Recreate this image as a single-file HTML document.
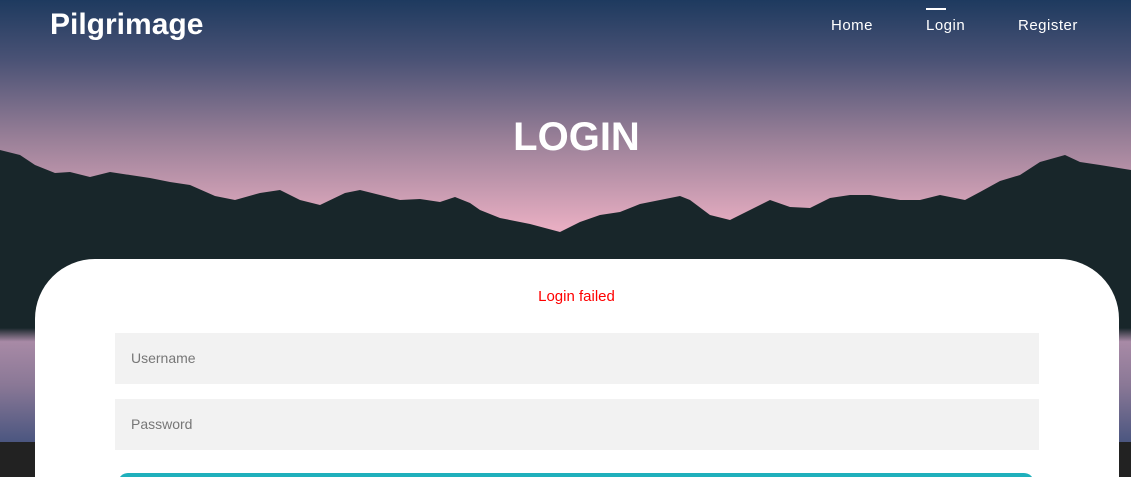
<!DOCTYPE html>
<html style="width:1131px;height:477px;overflow:hidden"><head><style>
*{margin:0;padding:0;box-sizing:border-box}
body{width:1131px;height:477px;overflow:hidden;font-family:"Liberation Sans","DejaVu Sans",sans-serif;background:#222;position:relative}
.bg{position:absolute;left:0;top:0;width:1131px;height:442px;background:linear-gradient(#1e3a5f 0px,#4a5275 60px,#9a8098 140px,#e8aec2 228px,#d8a0b8 260px)}
svg{position:absolute;left:0;top:0}
.logo{position:absolute;left:50px;top:8px;color:#fff;font-weight:bold;font-size:30px}
.nav{position:absolute;top:17px;color:#fff;font-size:15px;letter-spacing:.5px}
.bar{position:absolute;left:926px;top:8px;width:20px;height:2px;background:#fff}
h1{position:absolute;left:0;width:1153px;text-align:center;top:115px;color:#fff;font-size:40px;font-weight:bold}
.card{position:absolute;left:35px;top:259px;width:1084px;height:218px;background:#fff;border-radius:60px 60px 0 0}
.err{position:absolute;top:288px;left:0;width:1153px;text-align:center;color:#f00;font-size:15px}
.in{position:absolute;left:115px;width:924px;height:51px;background:#f2f2f2;color:#777;font-size:14px;padding:17px 16px}
.btn{position:absolute;left:118px;top:473px;width:916px;height:20px;background:#1fb0bc;border-radius:12px}
</style></head><body>
<div class="bg"></div>
<svg width="1131" height="442">
<defs><linearGradient id="l" x1="0" y1="0" x2="0" y2="1"><stop offset="0" stop-color="#18262a"/><stop offset="0.12" stop-color="#a88aa6"/><stop offset="0.5" stop-color="#8a7896"/><stop offset="1" stop-color="#4b5680"/></linearGradient></defs>
<polygon fill="#18262a" points="0,150 20,155 35,165 55,173 70,172 90,177 110,172 130,175 150,178 170,182 190,185 215,196 235,200 260,193 280,190 300,200 320,205 345,193 360,190 380,195 400,200 420,199 440,202 455,197 470,203 480,210 500,218 530,224 560,232 580,222 600,215 620,212 640,204 660,200 680,196 690,200 710,215 730,220 750,210 770,200 790,207 810,208 830,198 850,195 870,195 900,200 920,200 940,195 965,200 980,192 1000,181 1020,175 1040,162 1065,155 1080,162 1100,165 1131,170 1131,330 0,335"/>
<rect x="0" y="328" width="1131" height="114" fill="url(#l)"/>
</svg>
<div class="logo">Pilgrimage</div>
<div class="nav" style="left:831px">Home</div>
<div class="nav" style="left:926px">Login</div>
<div class="nav" style="left:1018px">Register</div>
<div class="bar"></div>
<h1>LOGIN</h1>
<div class="card"></div>
<div class="err">Login failed</div>
<div class="in" style="top:333px">Username</div>
<div class="in" style="top:399px">Password</div>
<div class="btn"></div>
</body></html>
